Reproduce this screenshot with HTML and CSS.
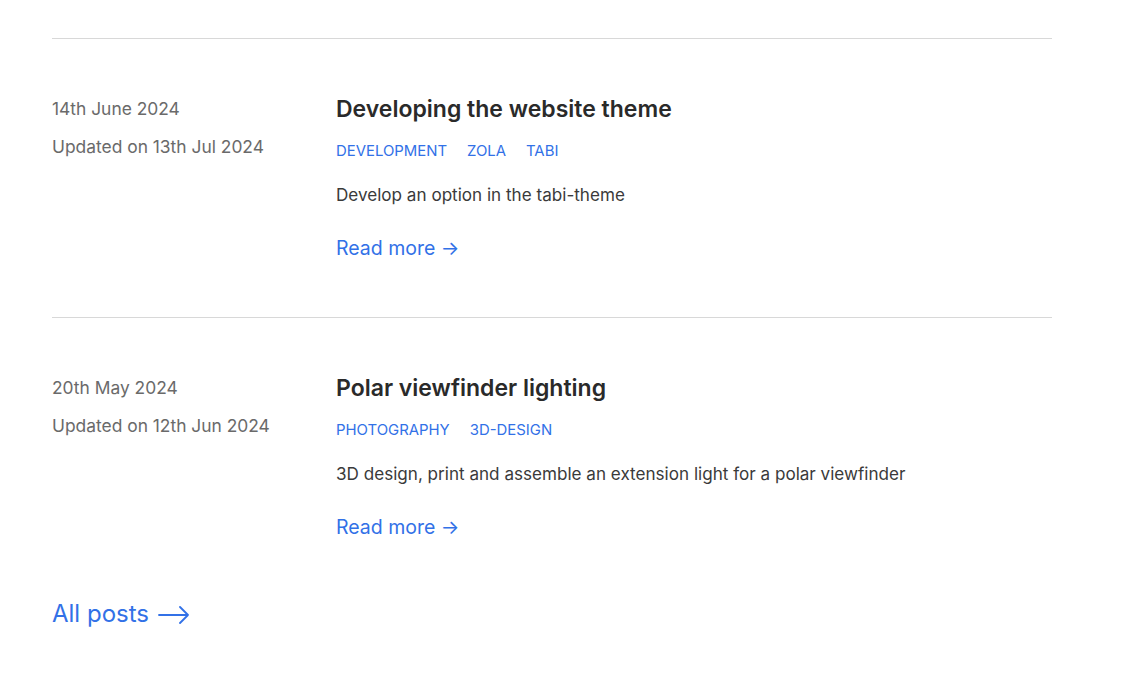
FILE: index.html
```html
<!DOCTYPE html>
<html lang="en">
<head>
    <meta charset="UTF-8">
    <title>Posts</title>
    <link rel="stylesheet" href="styles.css">
</head>
<body>

<main class="content">
    <div class="bloglist">
        <section class="post">
            <div class="post-meta">
                <p class="post-date">14th June 2024</p>
                <p class="post-date">Updated on 13th Jul 2024</p>
            </div>
            <div class="post-body">
                <h2 class="post-title"><a href="#">Developing the website theme</a></h2>
                <ul class="tags">
                    <li><a href="#">DEVELOPMENT</a></li>
                    <li><a href="#">ZOLA</a></li>
                    <li><a href="#">TABI</a></li>
                </ul>
                <p class="post-desc">Develop an option in the tabi-theme</p>
                <a class="read-more" href="#">Read more&nbsp;<span class="arrow">→</span></a>
            </div>
        </section>

        <section class="post">
            <div class="post-meta">
                <p class="post-date">20th May 2024</p>
                <p class="post-date">Updated on 12th Jun 2024</p>
            </div>
            <div class="post-body">
                <h2 class="post-title"><a href="#">Polar viewfinder lighting</a></h2>
                <ul class="tags">
                    <li><a href="#">PHOTOGRAPHY</a></li>
                    <li><a href="#">3D-DESIGN</a></li>
                </ul>
                <p class="post-desc">3D design, print and assemble an extension light for a polar viewfinder</p>
                <a class="read-more" href="#">Read more&nbsp;<span class="arrow">→</span></a>
            </div>
        </section>
    </div>

    <a class="all-posts" href="#">All posts
        <svg class="long-arrow" width="32" height="18" viewBox="0 0 32 18" fill="none" stroke="currentColor" stroke-width="1.8" stroke-linecap="round" stroke-linejoin="round">
            <path d="M1 9h29M22 1l8 8-8 8"/>
        </svg>
    </a>
</main>

</body>
</html>
```

FILE: styles.css
```css
body {
    margin: 0;
    font-family: Inter, "Noto Sans", sans-serif;
    background-color: #fff;
    color: #222226;
}

a {
    text-decoration: none;
    color: #3271e7;
}

.content {
    width: 1000px;
    padding: 38px 0 0 52px;
}

.post {
    display: flex;
    border-top: 1px solid #d8d8d8;
    padding: 56px 0 56px;
}

.post-meta {
    width: 284px;
    flex-shrink: 0;
}

.post-date {
    margin: 0 0 10px;
    font-size: 17.4px;
    line-height: 28px;
    color: #6a6a6a;
}

.post-body {
    flex: 1;
}

.post-title {
    margin: 0;
    font-size: 23px;
    font-weight: 600;
    line-height: 28px;
}

.post-title a {
    color: #2a2a2a;
}

.tags {
    list-style: none;
    display: flex;
    gap: 20px;
    margin: 18px 0 0;
    padding: 0;
    font-size: 14.9px;
    line-height: 20px;
}

.post-desc {
    margin: 22px 0 0;
    font-size: 17.1px;
    line-height: 24px;
    color: #3a3a3a;
}

.read-more {
    display: inline-block;
    margin-top: 28px;
    font-size: 19.5px;
    line-height: 26px;
}

.all-posts {
    display: inline-flex;
    align-items: center;
    gap: 9px;
    margin-top: 2px;
    font-size: 24px;
    line-height: 32px;
}

.long-arrow {
    margin-top: 2px;
}
```
